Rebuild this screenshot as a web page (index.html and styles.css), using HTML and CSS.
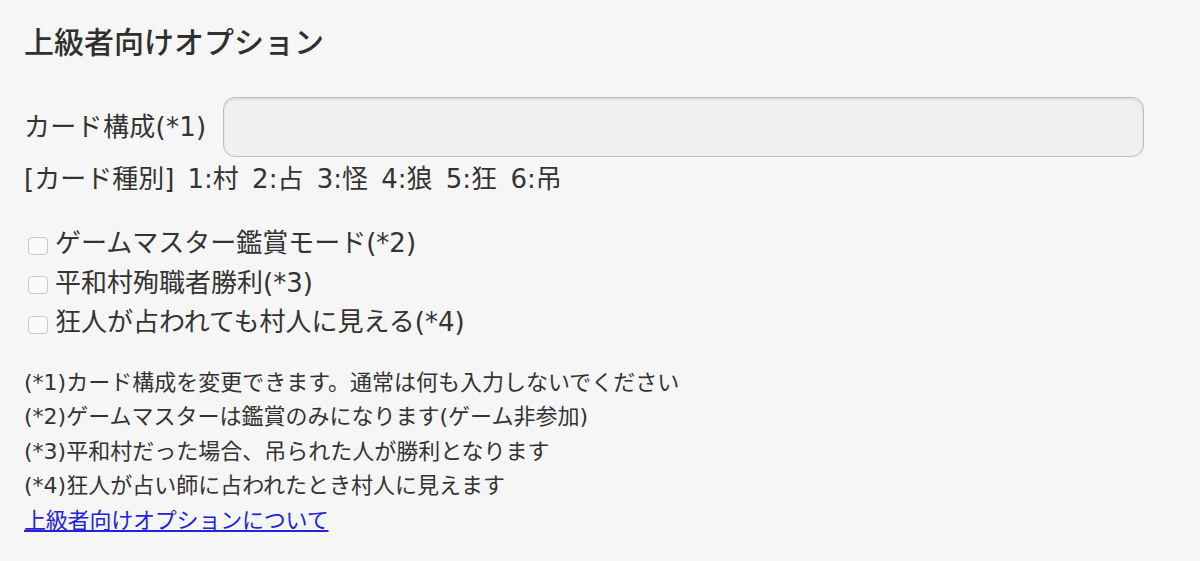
FILE: index.html
```html
<!DOCTYPE html>
<html lang="ja">
<head>
<meta charset="utf-8">
<link rel="stylesheet" href="styles.css">
</head>
<body>
<div class="panel">
  <h2 class="title">上級者向けオプション</h2>
  <div class="field">
    <label class="field-label">カード構成(*1)</label>
    <input class="field-input" type="text">
  </div>
  <p class="kinds">[カード種別] 1:村 2:占 3:怪 4:狼 5:狂 6:吊</p>
  <ul class="checks">
    <li class="check"><span class="box"></span>ゲームマスター鑑賞モード(*2)</li>
    <li class="check"><span class="box"></span>平和村殉職者勝利(*3)</li>
    <li class="check"><span class="box"></span>狂人が占われても村人に見える(*4)</li>
  </ul>
  <div class="notes">
    <p class="note">(*1)カード構成を変更できます。通常は何も入力しないでください</p>
    <p class="note">(*2)ゲームマスターは鑑賞のみになります(ゲーム非参加)</p>
    <p class="note">(*3)平和村だった場合、吊られた人が勝利となります</p>
    <p class="note">(*4)狂人が占い師に占われたとき村人に見えます</p>
    <a class="note link" href="#">上級者向けオプションについて</a>
  </div>
</div>
</body>
</html>
```

FILE: styles.css
```css
html, body {
  margin: 0;
  padding: 0;
  background: #f6f6f6;
}
body {
  font-family: "DejaVu Sans", "Noto Sans CJK JP", sans-serif;
  color: #333;
}
.panel {
  padding: 20px 24px 0 24px;
}
.title {
  margin: 0;
  font-size: 30px;
  font-weight: 500;
  line-height: 40px;
  color: #2f2f2f;
  font-family: "Noto Sans CJK JP", sans-serif;
}
.field {
  display: flex;
  align-items: center;
  gap: 16px;
  margin: 37px 32px 0 0;
}
.field-label {
  font-size: 26px;
  line-height: 36px;
  letter-spacing: 0.3px;
}
.field-input {
  flex: 1;
  height: 60px;
  box-sizing: border-box;
  border: 1px solid #bdbdbd;
  border-radius: 12px;
  background: #f0f0f0;
  box-shadow: inset 0 1px 3px rgba(0,0,0,0.12);
  margin: 0;
}
.kinds {
  margin: 4px 0 0 0;
  font-size: 26px;
  line-height: 36px;
  word-spacing: 5px;
}
.checks {
  list-style: none;
  margin: 27px 0 0 0;
  padding: 0;
}
.check {
  display: flex;
  align-items: center;
  font-size: 26px;
  line-height: 39.5px;
  height: 39.5px;
}
.box {
  width: 18px;
  height: 16px;
  border: 1px solid #c9c9c9;
  border-radius: 4px;
  background: #f9f9f9;
  margin: 4px 7px 0 4px;
  flex: none;
}
.notes {
  margin-top: 23px;
}
.note {
  display: block;
  margin: 0;
  font-size: 22px;
  line-height: 34.5px;
}
.link {
  color: #2323d8;
  text-decoration: underline;
  display: inline-block;
  letter-spacing: -0.2px;
}
```
